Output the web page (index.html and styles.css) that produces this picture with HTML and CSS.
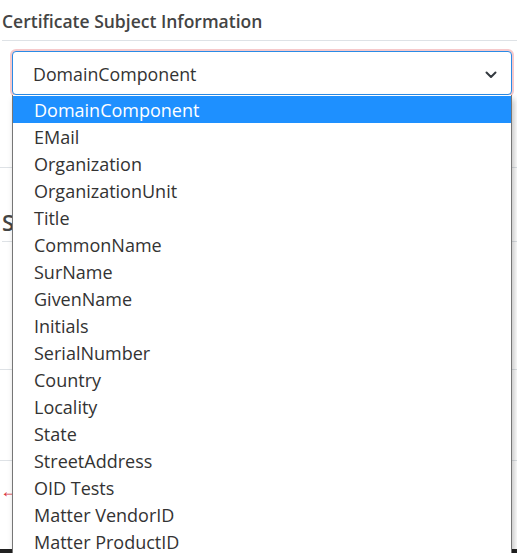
FILE: index.html
```html
<!DOCTYPE html>
<html>
<head>
<meta charset="utf-8">
<link rel="stylesheet" href="styles.css">
</head>
<body>
<div class="page">
  <h2 class="title">Certificate Subject Information</h2>
  <div class="rule"></div>
  <div class="select-area">
    <div class="select">
      <span class="select-value">DomainComponent</span>
      <svg class="chevron" width="12" height="8" viewBox="0 0 12 8"><path d="M1.5 1.5 L6 6 L10.5 1.5" fill="none" stroke="#343a40" stroke-width="2" stroke-linecap="round" stroke-linejoin="round"/></svg>
    </div>
    <ul class="options">
      <li class="opt active">DomainComponent</li>
      <li class="opt">EMail</li>
      <li class="opt">Organization</li>
      <li class="opt">OrganizationUnit</li>
      <li class="opt">Title</li>
      <li class="opt">CommonName</li>
      <li class="opt">SurName</li>
      <li class="opt">GivenName</li>
      <li class="opt">Initials</li>
      <li class="opt">SerialNumber</li>
      <li class="opt">Country</li>
      <li class="opt">Locality</li>
      <li class="opt">State</li>
      <li class="opt">StreetAddress</li>
      <li class="opt">OID Tests</li>
      <li class="opt">Matter VendorID</li>
      <li class="opt">Matter ProductID</li>
    </ul>
  </div>
  <div class="block b1"></div>
  <h2 class="title sub">Subject Alt Names</h2>
  <div class="rule"></div>
  <div class="block b2"></div>
  <div class="block b3"></div>
  <div class="arrow-row"><span class="arrow">&larr;</span></div>
  <div class="darkbar"></div>
</div>
</body>
</html>
```
FILE: styles.css
```css
html, body {
  margin: 0;
  padding: 0;
  background: #fff;
}
body {
  font-family: "Open Sans", "Noto Sans", sans-serif;
  color: #333;
  overflow: hidden;
  height: 553px;
}
.page {
  width: 517px;
}
.title {
  margin: 0;
  padding: 8px 0 0 2px;
  height: 34px;
  line-height: 26px;
  font-size: 17.5px;
  font-weight: 600;
  color: #444;
  box-sizing: border-box;
  white-space: nowrap;
}
.rule {
  margin-left: 2px;
  height: 0;
  border-top: 1px solid #dee2e6;
  margin-top: 6px;
}
.select-area {
  position: relative;
  margin: 10px 5px 0 12px;
}
.select {
  height: 44px;
  box-sizing: border-box;
  border: 1px solid #2a8be6;
  border-radius: 4px;
  box-shadow: 0 0 0 2px #f6c9cb;
  display: flex;
  align-items: center;
  justify-content: space-between;
  padding: 2px 14px 0 20px;
  background: #fff;
}
.select-value {
  font-size: 17.8px;
  color: #333;
}
.chevron {
  display: block;
  margin-top: 2px;
}
.options {
  position: absolute;
  z-index: 5;
  top: 44px;
  left: 0;
  width: 500px;
  box-sizing: border-box;
  margin: 0;
  padding: 1px 0 0 0;
  list-style: none;
  background: #fff;
  border-left: 1px solid #767676;
  border-right: 1px solid #767676;
  box-shadow: 2px 4px 6px rgba(0,0,0,0.25);
  height: 470px;
  overflow: hidden;
}
.opt {
  height: 27px;
  line-height: 27px;
  padding-top: 1px;
  box-sizing: border-box;
  padding-left: 21px;
  font-size: 18px;
  color: #333;
  white-space: nowrap;
}
.opt.active {
  background: #1e90ff;
  color: #fff;
}
.block {
  border-bottom: 1px solid #dee2e6;
  margin-left: 0;
}
.b1 {
  height: 72px;
}
.sub {
  padding-top: 42px;
  height: 66px;
  line-height: 24px;
  font-size: 22px;
}
.sub + .rule {
  margin-top: 7px;
}
.b2 {
  height: 127px;
}
.b3 {
  height: 90px;
}
.arrow-row {
  height: 88px;
  position: relative;
}
.arrow {
  display: block;
  padding-top: 17px;
  color: #d9343f;
  font-size: 18px;
  line-height: 24px;
}
.darkbar {
  height: 4px;
  background: #222;
}
```
